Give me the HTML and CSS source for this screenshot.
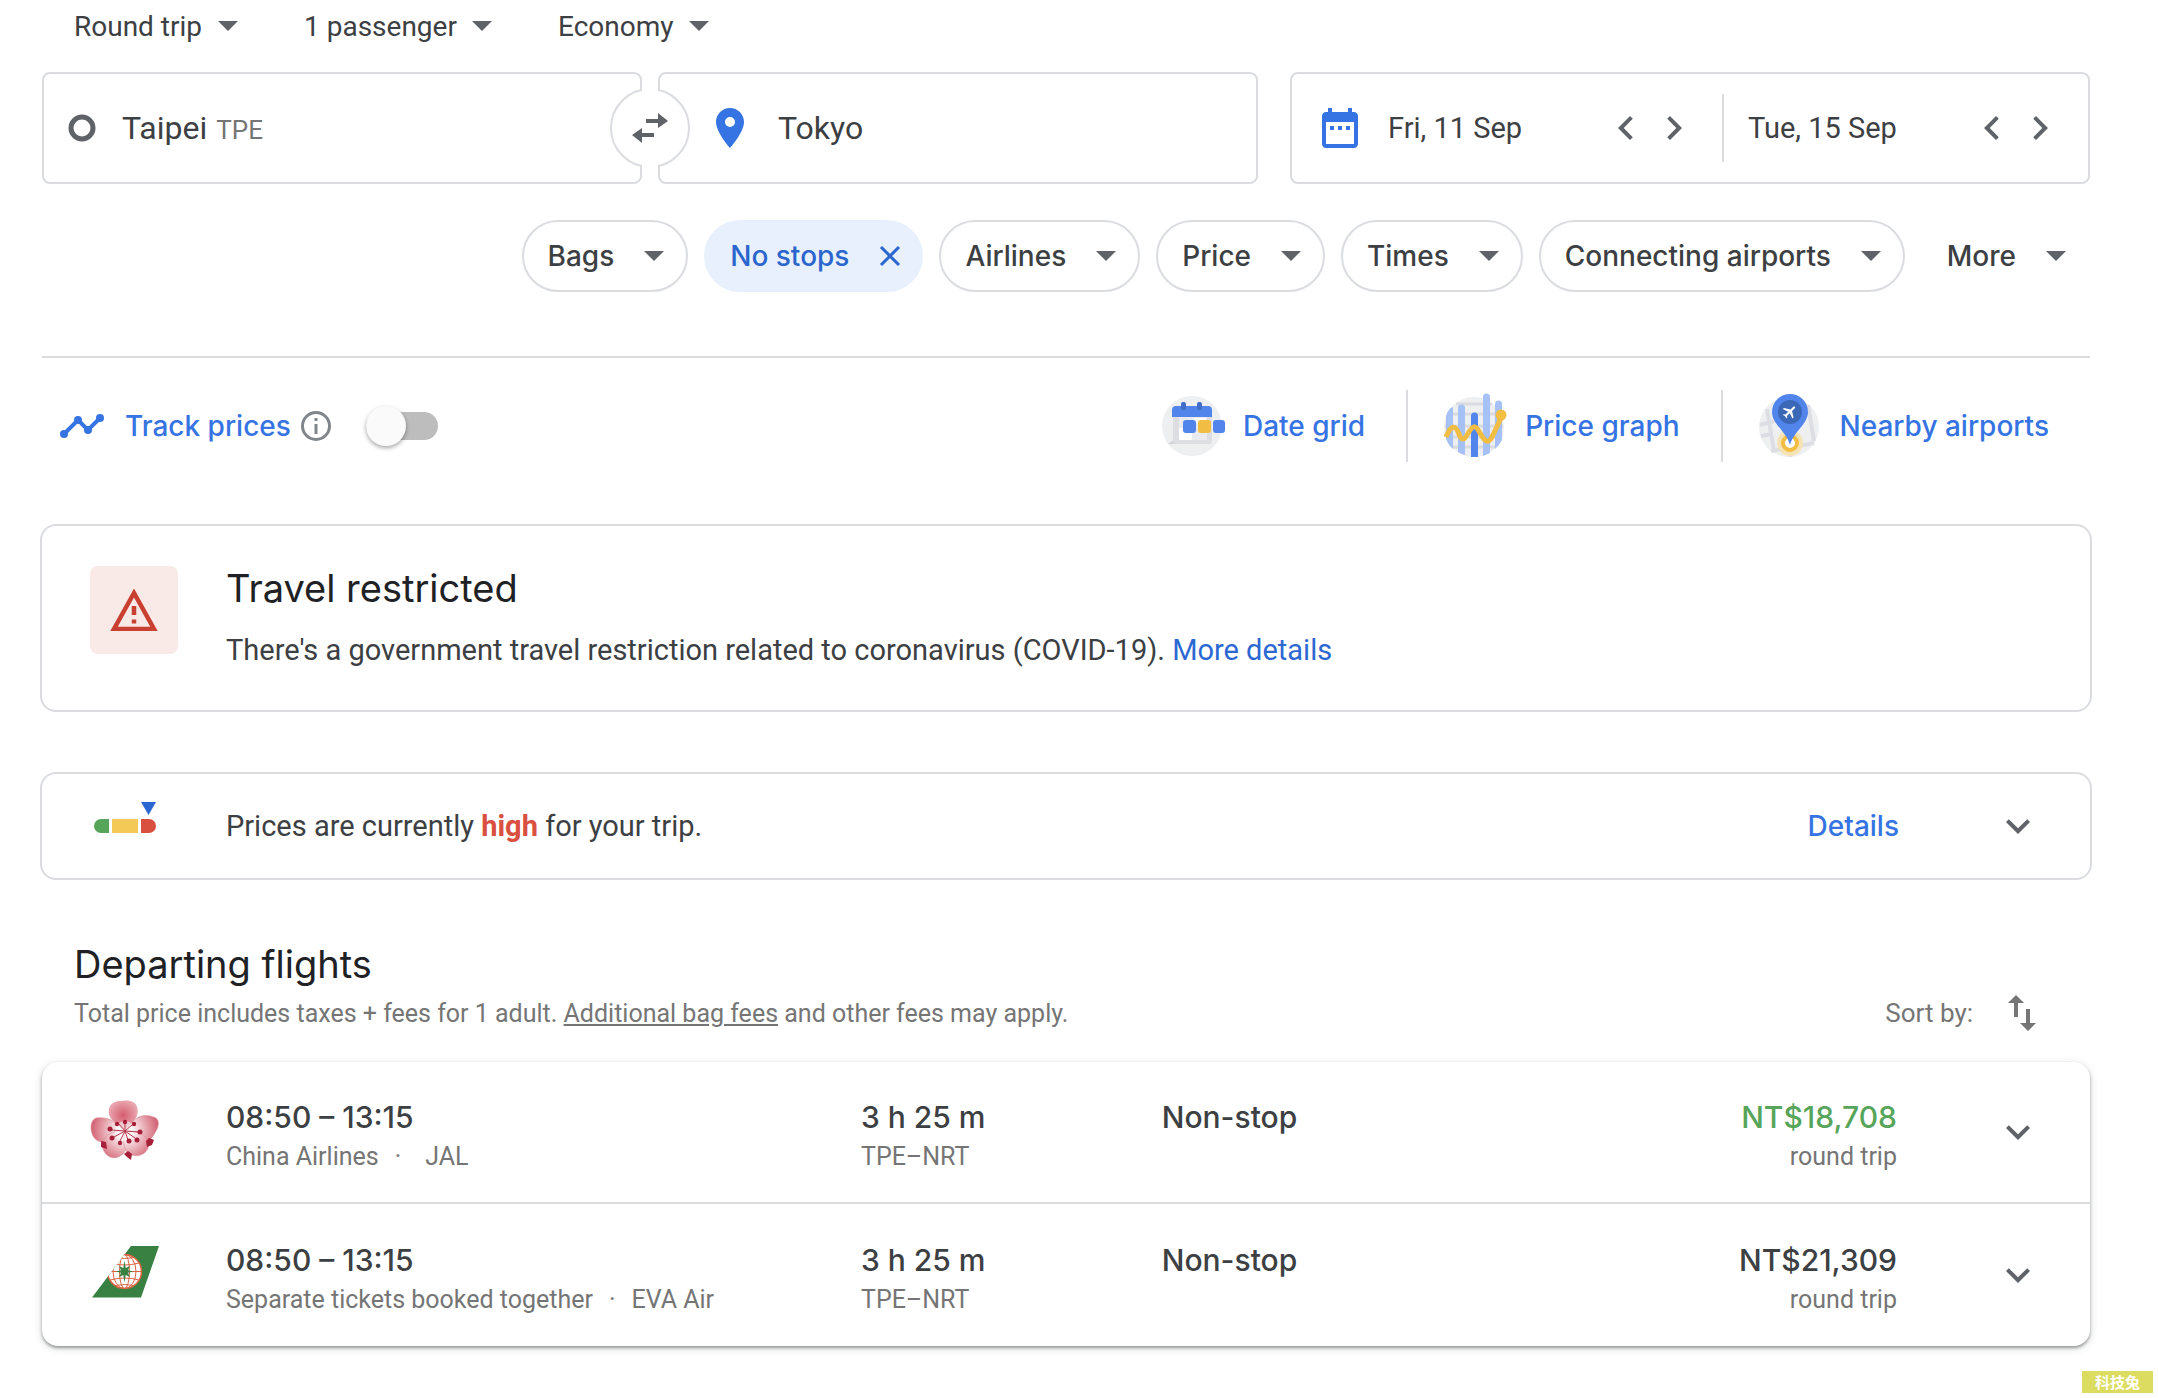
FILE: index.html
```html
<!DOCTYPE html>
<html lang="en">
  <head>
    <meta charset="UTF-8" />
    <meta name="viewport" content="width=device-width, initial-scale=1.0" />
    <title>Taipei to Tokyo | Flights</title>

    <link rel="stylesheet" href="styles.css">
  </head>

  <body>
    <!-- shared icons -->
    <svg class="sprite" aria-hidden="true">
      <symbol id="arrow" viewBox="0 0 20 10"><path d="M0 0h20L10 10z" /></symbol>
      <symbol id="left" viewBox="0 0 48 48"><path d="M30.8 14.8 28 12 16 24l12 12 2.800-2.800L21.700 24z" /></symbol>
      <symbol id="right" viewBox="0 0 48 48"><path d="M17.200 14.800 20 12l12 12-12 12-2.800-2.800L26.300 24z" /></symbol>
      <symbol id="down" viewBox="0 0 48 48"><path d="M14.800 17.200 24 26.300l9.200-9.100L36 20 24 32 12 20z" /></symbol>
    </svg>

    <main class="page">
      <form class="search">
        <div class="options">
          <div class="dropdown">
            <select aria-label="Trip type"><option>Round trip</option></select>
            <svg class="arrow"><use href="#arrow" /></svg>
          </div>
          <div class="dropdown">
            <select aria-label="Passengers"><option>1 passenger</option></select>
            <svg class="arrow"><use href="#arrow" /></svg>
          </div>
          <div class="dropdown">
            <select aria-label="Cabin class"><option>Economy</option></select>
            <svg class="arrow"><use href="#arrow" /></svg>
          </div>
        </div>

        <div class="fields">
          <div class="route">
            <label class="field from">
              <svg class="ring" viewBox="0 0 28 28"><circle cx="14" cy="14" r="11" /></svg>
              <input class="city" type="text" value="Taipei" aria-label="Where from?" />
              <span class="code">TPE</span>
            </label>
            <button type="button" class="swap" aria-label="Swap origin and destination">
              <svg viewBox="0 0 40 32">
                <path d="M28 1l10 8-10 7v-5H16V7h12zM12 16v5h12v4H12v6L2 23z" />
              </svg>
            </button>
            <label class="field to">
              <svg class="icon blue" viewBox="0 0 24 24">
                <path d="M12 2C8.130 2 5 5.130 5 9c0 5.250 7 13 7 13s7-7.750 7-13c0-3.870-3.130-7-7-7zm0 9.500a2.500 2.500 0 1 1 0-5 2.500 2.500 0 0 1 0 5z" />
              </svg>
              <input class="city" type="text" value="Tokyo" aria-label="Where to?" />
            </label>
          </div>

          <div class="dates">
            <div class="date">
              <svg class="icon blue" viewBox="0 0 24 24">
                <path d="M9 11H7v2h2v-2zm4 0h-2v2h2v-2zm4 0h-2v2h2v-2zm2-7h-1V2h-2v2H8V2H6v2H5c-1.110 0-2 .9-2 2v14c0 1.100.89 2 2 2h14c1.100 0 2-.9 2-2V6c0-1.100-.9-2-2-2zm0 16H5V9h14v11z" />
              </svg>
              <input type="text" value="Fri, 11 Sep" aria-label="Departure date" />
              <button type="button" aria-label="Earlier departure"><svg><use href="#left" /></svg></button>
              <button type="button" aria-label="Later departure"><svg><use href="#right" /></svg></button>
            </div>
            <div class="date return">
              <input type="text" value="Tue, 15 Sep" aria-label="Return date" />
              <button type="button" aria-label="Earlier return"><svg><use href="#left" /></svg></button>
              <button type="button" aria-label="Later return"><svg><use href="#right" /></svg></button>
            </div>
          </div>
        </div>

        <div class="chips">
          <button type="button" class="chip">Bags <svg class="arrow"><use href="#arrow" /></svg></button>
          <button type="button" class="chip active">
            No stops
            <svg class="close" viewBox="0 0 22 22"><path d="M2 2l18 18M20 2L2 20" /></svg>
          </button>
          <button type="button" class="chip">Airlines <svg class="arrow"><use href="#arrow" /></svg></button>
          <button type="button" class="chip">Price <svg class="arrow"><use href="#arrow" /></svg></button>
          <button type="button" class="chip">Times <svg class="arrow"><use href="#arrow" /></svg></button>
          <button type="button" class="chip">Connecting airports <svg class="arrow"><use href="#arrow" /></svg></button>
          <button type="button" class="chip more">More <svg class="arrow"><use href="#arrow" /></svg></button>
        </div>
      </form>

      <section class="tools">
        <div class="track">
          <svg class="trend" viewBox="0 0 44 24">
            <path d="M4 20L18 6l10 10L40 4" />
            <circle cx="4" cy="20" r="4" />
            <circle cx="18" cy="6" r="4" />
            <circle cx="28" cy="16" r="4" />
            <circle cx="40" cy="4" r="4" />
          </svg>
          <label for="track">Track prices</label>
          <svg class="info" viewBox="0 0 30 30">
            <circle cx="15" cy="15" r="13.500" />
            <path d="M15 13v10M15 7v3" />
          </svg>
          <input id="track" class="toggle" type="checkbox" />
        </div>

        <a class="tool" href="#">
          <svg viewBox="0 0 64 66">
            <circle cx="30" cy="33" r="30" fill="#eeeff1" />
            <path d="M6 51h8V20h-2v27z" fill="#cfd1d5" />
            <rect x="11" y="14" width="39" height="37" rx="3" fill="#dcdee2" />
            <path d="M17 24h28v23H17z" fill="#e9ebee" />
            <path d="M17 35h13v12H17zM32 25h12v6H32z" fill="#fff" />
            <path d="M10 24v-7q0-4 4-4h32q4 0 4 4v7z" fill="#5185ec" />
            <rect x="19" y="9" width="5" height="8" rx="2" fill="#3f6fc9" />
            <rect x="35" y="9" width="5" height="8" rx="2" fill="#3f6fc9" />
            <rect x="21" y="27" width="13" height="13" rx="3" fill="#5185ec" />
            <rect x="36" y="27" width="13" height="13" rx="3" fill="#f1bd42" />
            <rect x="51" y="27" width="12" height="13" rx="3" fill="#5185ec" />
          </svg>
          Date grid
        </a>
        <a class="tool" href="#">
          <svg viewBox="0 0 64 66">
            <circle cx="30" cy="34" r="30" fill="#eeeff1" />
            <path d="M12 11h36M3 21h54M1 33h58M2 44h56M9 54h42" fill="none" stroke="#d9dbe0" stroke-width="3" />
            <g fill="#a5c1f6">
              <path d="M2 23q2-7 7-9v42q-4-3-7-10z" />
              <path d="M14 15a3.500 3.500 0 0 1 7 0v47q-4-1-7-3z" />
              <path d="M39 4a3.500 3.500 0 0 1 7 0v56q-4 2-7 3z" />
              <path d="M51 11a3.500 3.500 0 0 1 7 0v36q-3 6-7 9z" />
            </g>
            <path d="M27 23a3.500 3.500 0 0 1 7 0v41h-7z" fill="#5185ec" />
            <path d="M2 44c5-12 9-13 13-3 2 6 5 7 8 1 6-10 8-11 13-2 5 9 8 11 12 4l9-19" fill="none" stroke="#f1bd42" stroke-width="5" />
            <circle cx="57" cy="22" r="5.500" fill="#f1bd42" />
          </svg>
          Price graph
        </a>
        <a class="tool" href="#">
          <svg viewBox="0 0 64 66">
            <circle cx="30" cy="34" r="30" fill="#eeeff1" />
            <path d="M8 16l7 42M1 32l29-8M49 12l6 36M12 58l43-8M31 64v-14M2 43l11-2" fill="none" stroke="#dcdee3" stroke-width="4" />
            <circle cx="31" cy="50" r="13" fill="#f5e3b6" />
            <circle cx="31" cy="50" r="7" fill="#fff" stroke="#f1bd42" stroke-width="4" />
            <path d="M31 52C27 38 13 31 13 19a18 18 0 0 1 36 0c0 12-14 19-18 33z" fill="#5185ec" />
            <circle cx="31" cy="19" r="12" fill="#3b67b7" />
            <path transform="translate(31 19) rotate(45) scale(.72) translate(-12 -12)" fill="#fff" d="M21 16v-2l-8-5V3.500a1.500 1.500 0 0 0-3 0V9l-8 5v2l8-2.500V19l-2 1.500V22l3.500-1 3.500 1v-1.500L13 19v-5.500z" />
          </svg>
          Nearby airports
        </a>
      </section>

      <section class="card alert">
        <div class="alert-icon">
          <svg viewBox="0 0 48 42">
            <path d="M24 4L4 40h40z" fill="none" stroke-width="4.500" />
            <path d="M24 17v9M24 30.500v4" stroke-width="4.500" />
          </svg>
        </div>
        <div class="alert-text">
          <h2>Travel restricted</h2>
          <p>There's a government travel restriction related to coronavirus (COVID-19). <a href="#">More details</a></p>
        </div>
      </section>

      <section class="card prices">
        <svg class="gauge" viewBox="0 0 62 32">
          <path d="M15 17v14H7A7 7 0 0 1 7 17z" fill="#57a55a" />
          <path d="M18 17h26v14H18z" fill="#f5c955" />
          <path d="M47 17h8a7 7 0 0 1 0 14h-8z" fill="#d9503f" />
          <path d="M47 0h15l-7.500 13z" fill="#2c66d0" />
        </svg>
        <p>Prices are currently <strong>high</strong> for your trip.</p>
        <a href="#">Details</a>
        <button class="expand" aria-label="Show price details"><svg><use href="#down" /></svg></button>
      </section>

      <section class="results">
        <h2>Departing flights</h2>
        <div class="results-info">
          <p>Total price includes taxes + fees for 1 adult. <a href="#">Additional bag fees</a> and other fees may apply.</p>
          <button class="sort">
            Sort by:
            <svg viewBox="0 0 28 36">
              <path d="M8 0l8 8h-6v14H6V8H0zM20 36l-8-8h6V14h4v14h6z" />
            </svg>
          </button>
        </div>

        <ul class="flights">
          <li class="flight">
            <svg class="logo" viewBox="6 6 72 72">
              <defs>
                <radialGradient id="petal" gradientUnits="userSpaceOnUse" cx="41" cy="41" r="36">
                  <stop offset=".25" stop-color="#fbeef0" />
                  <stop offset=".65" stop-color="#e39aa4" />
                  <stop offset="1" stop-color="#cf5468" />
                </radialGradient>
                <radialGradient id="top-petal">
                  <stop offset="0" stop-color="#d45e70" />
                  <stop offset="1" stop-color="#e9a5ae" />
                </radialGradient>
              </defs>
              <g fill="url(#petal)" stroke="#d98a95" stroke-width=".6">
                <path d="M40 40C28 30 26 27 12 28 6 31 6 39 9 46c5 8 13 9 32-5z" />
                <path d="M41 40c10-15 20-17 31-12 5 5 1 12-3 18-5 9-16 7-28-5z" />
                <path d="M41 41c-13-1-26 6-22 18 3 8 11 11 17 7 7-3 9-14 5-25z" />
                <path d="M41 41c14-2 26 6 23 17-3 8-14 10-20 5-5-5-5-12-3-22z" />
              </g>
              <path d="M41 40C30 32 23 28 25 19c1-6 7-8 11-8 6-1 15-1 17 6 3 8-3 15-12 23z" fill="url(#top-petal)" />
              <g fill="#a81f39">
                <path d="M17 51l5 1 1 7-6-2z" />
                <path d="M62 51l3-3 5 2-2 5-5 2z" />
                <path d="M40 64l4-3 4 3-1 6-4-3z" />
              </g>
              <circle cx="41" cy="41" r="10" fill="#fff" opacity=".55" />
              <path d="M41 41L34 33M41 41v-8M41 41l8-7M41 41l-13-1M41 41l13 1M41 41L30 47M41 41l-5 10M41 41l3 9M41 41l10 7" fill="none" stroke="#b5354c" stroke-width="1" />
              <g fill="#a81f39">
                <circle cx="33" cy="34" r="2.200" />
                <circle cx="41" cy="32" r="2.200" />
                <circle cx="50" cy="34" r="2.200" />
                <circle cx="26" cy="39" r="2.500" />
                <circle cx="56" cy="42" r="2.500" />
                <circle cx="28" cy="48" r="2.500" />
                <circle cx="36" cy="53" r="2.200" />
                <circle cx="45" cy="51" r="2.500" />
                <circle cx="53" cy="50" r="2.500" />
              </g>
            </svg>
            <div class="cell">
              <p class="main">08:50 – 13:15</p>
              <p class="sub">China Airlines<span class="dot">·</span><span class="partner">JAL</span></p>
            </div>
            <div class="cell">
              <p class="main">3 h 25 m</p>
              <p class="sub">TPE–NRT</p>
            </div>
            <div class="cell">
              <p class="main">Non-stop</p>
            </div>
            <div class="cell price">
              <p class="main good">NT$18,708</p>
              <p class="sub">round trip</p>
            </div>
            <button class="expand" aria-label="Flight details"><svg><use href="#down" /></svg></button>
          </li>
          <li class="flight">
            <svg class="logo" viewBox="6 3 72 72">
              <clipPath id="tail"><path d="M47 10h28L57 61.500H8z" /></clipPath>
              <path d="M47 10h28L57 61.500H8z" fill="#398143" />
              <g clip-path="url(#tail)" fill="none" stroke="#d9633f" stroke-width="1">
                <circle cx="40.500" cy="35.500" r="17" fill="#fff" stroke-width="1.500" />
                <ellipse cx="40.500" cy="35.500" rx="5" ry="17" />
                <ellipse cx="40.500" cy="35.500" rx="11.500" ry="17" />
                <path d="M23.500 35.500h34M26 27q14.500 4 29 0M26 44q14.500-4 29 0M31 21.500q9.500 2 19 0M31 49.500q9.500-2 19 0" />
              </g>
              <path d="M40.500 24.500l1.200 7.500 4.300-2-2 4.300 5 1.200-5 1.200 2 4.300-4.300-2-1.200 7.500-1.200-7.500-4.300 2 2-4.300-5-1.200 5-1.200-2-4.300 4.300 2z" fill="#398143" />
            </svg>
            <div class="cell">
              <p class="main">08:50 – 13:15</p>
              <p class="sub">Separate tickets booked together<span class="dot">·</span>EVA Air</p>
            </div>
            <div class="cell">
              <p class="main">3 h 25 m</p>
              <p class="sub">TPE–NRT</p>
            </div>
            <div class="cell">
              <p class="main">Non-stop</p>
            </div>
            <div class="cell price">
              <p class="main">NT$21,309</p>
              <p class="sub">round trip</p>
            </div>
            <button class="expand" aria-label="Flight details"><svg><use href="#down" /></svg></button>
          </li>
        </ul>
      </section>
    </main>

    <div class="watermark" lang="zh-Hant">科技兔</div>
  </body>
</html>
```
FILE: styles.css
```css
* {
  margin: 0;
  padding: 0;
  box-sizing: border-box;
}

body {
  background: #fff;
  color: #3c4043;
  font-family: Roboto, sans-serif;
  font-size: 28px;
}

a {
  color: #2c68d2;
  text-decoration: none;
}

button,
input,
select {
  border: none;
  background: none;
  color: inherit;
  font: inherit;
}

button,
select {
  cursor: pointer;
}

h2 {
  color: #202124;
  font-family: Inter, sans-serif;
  font-size: 38px;
  font-weight: 400;
}

svg {
  display: block;
  flex: none;
}

.sprite {
  display: none;
}

.page {
  padding: 0 68px 48px 42px;
}

.arrow {
  width: 20px;
  height: 10px;
  fill: #5f6368;
}

.icon {
  width: 48px;
  height: 48px;
}

.blue {
  fill: #3574e2;
}

/* search form */
.options {
  display: flex;
  gap: 66px;
  padding-left: 32px;
}

.dropdown {
  display: grid;
  align-items: center;
  height: 52px;
}

.dropdown select,
.dropdown .arrow {
  grid-area: 1 / 1;
}

.dropdown select {
  appearance: none;
  padding-right: 35px;
}

.dropdown .arrow {
  justify-self: end;
  pointer-events: none;
}

.fields {
  display: grid;
  grid-template-columns: 38fr 25fr;
  gap: 32px;
  margin-top: 20px;
}

.route {
  position: relative;
  display: grid;
  grid-template-columns: 1fr 1fr;
  gap: 16px;
}

.field,
.dates {
  height: 112px;
  border: 2px solid #dadce0;
  border-radius: 8px;
}

.field {
  display: flex;
  align-items: center;
  font-size: 32px;
}

.from {
  padding-left: 24px;
}

.to {
  padding-left: 46px;
}

.ring {
  width: 28px;
  height: 28px;
  margin-right: 26px;
  fill: none;
  stroke: #5f6368;
  stroke-width: 5;
}

.city {
  field-sizing: content;
  min-width: 0;
}

.to .city {
  flex: 1;
  margin-left: 24px;
}

.code {
  margin-left: 9px;
  padding-top: 4px;
  color: #757575;
  font-size: 26px;
}

.swap {
  position: absolute;
  top: 50%;
  left: 50%;
  display: grid;
  place-items: center;
  width: 80px;
  height: 80px;
  border: 2px solid #dadce0;
  border-radius: 50%;
  background: #fff;
  transform: translate(-50%, -50%);
}

/* hides the circle outline between the two fields */
.swap::before {
  content: "";
  position: absolute;
  top: -2px;
  bottom: -2px;
  width: 16px;
  background: #fff;
}

.swap svg {
  position: relative;
  width: 40px;
  height: 32px;
  fill: #5f6368;
}

.dates {
  display: grid;
  grid-template-columns: 61fr 55fr;
  align-items: center;
  padding-left: 24px;
  font-size: 29px;
}

.date {
  display: flex;
  align-items: center;
  height: 68px;
  padding-right: 24px;
}

.date input {
  flex: 1;
  width: 0;
  padding-left: 24px;
}

.date button svg {
  width: 48px;
  height: 48px;
  fill: #5f6368;
}

.return {
  border-left: 2px solid #dadce0;
}

.chips {
  display: flex;
  justify-content: flex-end;
  gap: 16px;
  margin-top: 36px;
}

.chip {
  display: flex;
  align-items: center;
  gap: 30px;
  height: 72px;
  padding: 0 22px 0 24px;
  border: 2px solid #dadce0;
  border-radius: 36px;
  font-family: Inter, sans-serif;
  font-weight: 500;
}

.chip.active {
  padding-right: 20px;
  border-color: #e8f0fe;
  background: #e8f0fe;
  color: #2a66cd;
}

.chip.more {
  border-color: transparent;
}

.close {
  width: 22px;
  height: 22px;
  fill: none;
  stroke: #2a66cd;
  stroke-width: 3;
}

/* price tools */
.tools {
  display: flex;
  align-items: center;
  height: 138px;
  margin-top: 64px;
  border-top: 2px solid #dadce0;
  color: #3574e2;
  font-family: Inter, sans-serif;
  font-weight: 500;
}

.track {
  display: flex;
  flex: 1;
  align-items: center;
  padding-left: 18px;
}

.trend {
  width: 44px;
  height: 24px;
  margin-right: 21px;
  fill: #3574e2;
}

.trend path {
  fill: none;
  stroke: #3574e2;
  stroke-width: 4;
}

.info {
  width: 30px;
  height: 30px;
  margin-left: 10px;
  fill: none;
  stroke: #80868b;
  stroke-width: 3;
}

.toggle {
  display: flex;
  align-items: center;
  width: 72px;
  height: 28px;
  margin-left: 35px;
  border-radius: 14px;
  background: #bdbdbd;
  appearance: none;
  cursor: pointer;
}

.toggle::before {
  content: "";
  width: 40px;
  height: 40px;
  border-radius: 50%;
  background: #fafafa;
  box-shadow: 0 2px 4px rgba(0, 0, 0, 0.35);
}

.toggle:checked {
  justify-content: flex-end;
  background: #8ab4f8;
}

.tool {
  display: flex;
  align-items: center;
  gap: 17px;
  height: 72px;
  padding: 0 41px 0 36px;
  color: #3574e2;
}

.tool + .tool {
  border-left: 2px solid #dadce0;
}

.tool svg {
  width: 64px;
  height: 66px;
}

/* notice cards */
.card {
  display: flex;
  margin: 30px -2px 0;
  border: 2px solid #dadce0;
  border-radius: 16px;
  font-size: 29px;
  line-height: 40px;
}

.alert {
  gap: 48px;
  padding: 40px 48px;
}

.alert h2 {
  margin-bottom: 20px;
  line-height: 44px;
}

.alert-icon {
  display: grid;
  place-items: center;
  width: 88px;
  height: 88px;
  border-radius: 8px;
  background: #f9e9e7;
}

.alert-icon svg {
  width: 48px;
  height: 42px;
  stroke: #c94030;
}

.prices {
  align-items: center;
  height: 108px;
  margin-top: 60px;
  padding: 0 48px 0 52px;
}

.gauge {
  width: 62px;
  height: 32px;
  margin: 0 70px 16px 0;
}

.prices p {
  flex: 1;
}

.prices strong {
  color: #d9503f;
}

.prices a {
  margin-right: 95px;
  color: #3574e2;
  font-family: Inter, sans-serif;
  font-size: 28px;
  font-weight: 500;
}

.expand svg {
  width: 48px;
  height: 48px;
  fill: #5f6368;
}

/* results */
.results {
  margin-top: 60px;
}

.results h2 {
  padding-left: 32px;
  line-height: 48px;
}

.results-info {
  display: flex;
  align-items: center;
  justify-content: space-between;
  height: 50px;
  padding: 0 54px 0 32px;
  color: #757575;
  font-size: 25px;
}

.results-info a {
  color: inherit;
  text-decoration: underline;
}

.sort {
  display: flex;
  align-items: center;
  gap: 35px;
  font-size: 26px;
}

.sort svg {
  width: 28px;
  height: 36px;
  fill: #757575;
}

.flights {
  margin-top: 24px;
  border-radius: 16px;
  box-shadow: 0 2px 3px rgba(60, 64, 67, 0.45), 0 2px 8px rgba(60, 64, 67, 0.2);
  list-style: none;
}

.flight {
  display: grid;
  grid-template-columns: 136px 19fr 9fr 11fr 11fr 145px;
  align-items: center;
  height: 142px;
  padding: 0 48px;
}

.flight:not(:last-child) {
  border-bottom: 2px solid #dadce0;
}

.logo {
  width: 72px;
  height: 72px;
}

.cell {
  height: 90px;
  padding-top: 10px;
  line-height: 40px;
}

.main {
  font-family: Inter, sans-serif;
  font-size: 30px;
  font-weight: 500;
}

.sub {
  color: #757575;
  font-size: 25px;
}

.dot {
  margin: 0 16px;
}

.partner {
  margin-left: 8px;
}

.price {
  text-align: right;
}

.good {
  color: #57a55a;
}

.flight .expand {
  justify-self: end;
}

.watermark {
  position: absolute;
  right: 5px;
  bottom: 5px;
  width: 71px;
  background: #dbdc60;
  color: #fff;
  font: bold 15px/22px "Noto Sans CJK TC", sans-serif;
  text-align: center;
}
```
